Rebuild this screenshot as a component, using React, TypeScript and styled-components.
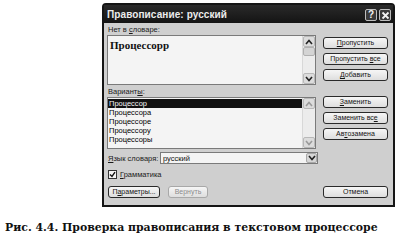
import styled, { createGlobalStyle } from "styled-components";

const GlobalStyle = createGlobalStyle`
  html, body {
    margin: 0;
    padding: 0;
    background: #ffffff;
  }
  body {
    font-family: "Liberation Sans", "DejaVu Sans", sans-serif;
  }
`;

const variants = [
  "Процессор",
  "Процессора",
  "Процессоре",
  "Процессору",
  "Процессоры",
];

function ScrollArrow({ up, faded }: { up?: boolean; faded?: boolean }) {
  return (
    <svg width="8" height="6" viewBox="0 0 8 6">
      <path
        d={up ? "M1 5 L4 1.5 L7 5" : "M1 1 L4 4.5 L7 1"}
        fill="none"
        stroke={faded ? "#9a9a9a" : "#222"}
        strokeWidth="1.6"
      />
    </svg>
  );
}

function App() {
  return (
    <Page>
      <GlobalStyle />
      <Dialog>
        <TitleBar>
          <Title>Правописание: русский</Title>
          <TitleButtons>
            <TitleButton>?</TitleButton>
            <TitleButton>
              <svg width="9" height="9" viewBox="0 0 9 9">
                <path d="M1.5 1.5 L7.5 7.5 M7.5 1.5 L1.5 7.5" stroke="#f2f2f2" strokeWidth="1.8" />
              </svg>
            </TitleButton>
          </TitleButtons>
        </TitleBar>
        <Body>
          <Section>
            <LeftCol>
              <Label>
                Нет в <Key>с</Key>ловаре:
              </Label>
              <TextBox>
                <Word>Процессорр</Word>
                <ScrollBar>
                  <ArrowBox>
                    <ScrollArrow up />
                  </ArrowBox>
                  <Thumb />
                  <Track />
                  <ArrowBox>
                    <ScrollArrow />
                  </ArrowBox>
                </ScrollBar>
              </TextBox>
            </LeftCol>
            <RightCol $offset={12}>
              <Button>
                <Key>П</Key>ропустить
              </Button>
              <Button>
                Пропустить <Key>в</Key>се
              </Button>
              <Button>
                <Key>Д</Key>обавить
              </Button>
            </RightCol>
          </Section>
          <Section>
            <LeftCol>
              <Label $gap={2}>
                Вариант<Key>ы</Key>:
              </Label>
              <ListBox>
                <Items>
                  {variants.map((v, i) => (
                    <Item key={v} $selected={i === 0}>
                      {v}
                    </Item>
                  ))}
                </Items>
                <ScrollBar>
                  <ArrowBox>
                    <ScrollArrow up faded />
                  </ArrowBox>
                  <Track />
                  <ArrowBox>
                    <ScrollArrow faded />
                  </ArrowBox>
                </ScrollBar>
              </ListBox>
            </LeftCol>
            <RightCol $offset={11}>
              <Button>
                <Key>З</Key>аменить
              </Button>
              <Button>
                Заменить вс<Key>е</Key>
              </Button>
              <Button>
                Ав<Key>т</Key>озамена
              </Button>
            </RightCol>
          </Section>
          <LangRow>
            <LangLabel>
              <Key>Я</Key>зык словаря:
            </LangLabel>
            <Combo>
              <ComboText>русский</ComboText>
              <ComboButton>
                <ScrollArrow />
              </ComboButton>
            </Combo>
          </LangRow>
          <CheckRow>
            <CheckBox>
              <svg width="7" height="7" viewBox="0 0 7 7">
                <path d="M1 3.5 L3 5.5 L6 1.2" fill="none" stroke="#111" strokeWidth="1.4" />
              </svg>
            </CheckBox>
            <CheckLabel>
              <Key>Г</Key>рамматика
            </CheckLabel>
          </CheckRow>
          <BottomRow>
            <BottomGroup>
              <Button $width={52}>
                П<Key>а</Key>раметры...
              </Button>
              <Button $width={40} $disabled>
                Вернуть
              </Button>
            </BottomGroup>
            <Button>Отмена</Button>
          </BottomRow>
        </Body>
      </Dialog>
      <Caption>
        Рис. 4.4. Проверка правописания в текстовом процессоре
      </Caption>
    </Page>
  );
}

export default App;

const Page = styled.div`
  width: 400px;
  height: 240px;
  padding-top: 3px;
  box-sizing: border-box;
  display: flex;
  flex-direction: column;
`;

const Dialog = styled.div`
  margin-left: 102px;
  width: 293px;
  height: 204px;
  box-sizing: border-box;
  border: 2px solid #151515;
  border-radius: 4px 4px 0 0;
  background: #cfcfcf;
  display: flex;
  flex-direction: column;
`;

const TitleBar = styled.div`
  height: 18px;
  flex: none;
  background: linear-gradient(#2a2a2a, #141414);
  display: flex;
  align-items: center;
  justify-content: space-between;
  padding: 0 2px 0 3px;
`;

const Title = styled.div`
  color: #ececec;
  font-size: 10px;
  font-weight: bold;
  letter-spacing: 0.1px;
`;

const TitleButtons = styled.div`
  display: flex;
  gap: 2px;
  margin-top: 2px;
`;

const TitleButton = styled.div`
  width: 12px;
  height: 12px;
  box-sizing: border-box;
  border: 1px solid #bdbdbd;
  border-radius: 2px;
  background: #3a3a3a;
  color: #f2f2f2;
  font-size: 10px;
  font-weight: bold;
  line-height: 10px;
  display: flex;
  align-items: center;
  justify-content: center;
`;

const Body = styled.div`
  flex: 1;
  padding: 2px 5px 0 3px;
  display: flex;
  flex-direction: column;
`;

const Section = styled.div`
  display: grid;
  grid-template-columns: 209px 65px;
  column-gap: 7px;
`;

const LeftCol = styled.div`
  display: flex;
  flex-direction: column;
`;

const RightCol = styled.div<{ $offset: number }>`
  display: flex;
  flex-direction: column;
  gap: 4px;
  padding-top: ${(p) => p.$offset}px;
`;

const Label = styled.div<{ $gap?: number }>`
  font-size: 7.5px;
  line-height: 10px;
  color: #1a1a1a;
  padding-left: 1px;
  margin-top: ${(p) => p.$gap ?? 0}px;
`;

const Key = styled.span`
  text-decoration: underline;
`;

const TextBox = styled.div`
  height: 50px;
  box-sizing: border-box;
  border: 1px solid #7a7a7a;
  background: #f4f4f4;
  display: flex;
`;

const Word = styled.div`
  flex: 1;
  font-family: "Liberation Serif", "DejaVu Serif", serif;
  font-weight: bold;
  font-size: 11px;
  padding: 3px 0 0 2px;
  color: #111;
`;

const ScrollBar = styled.div`
  width: 12px;
  flex: none;
  display: flex;
  flex-direction: column;
  background: #ececec;
  border-left: 1px solid #d8d8d8;
`;

const ArrowBox = styled.div`
  height: 11px;
  box-sizing: border-box;
  border: 1px solid #b8b8b8;
  border-radius: 2px;
  background: #dcdcdc;
  display: flex;
  align-items: center;
  justify-content: center;
`;

const Thumb = styled.div`
  height: 9px;
  box-sizing: border-box;
  border: 1px solid #b0b0b0;
  border-radius: 2px;
  background: #d4d4d4;
`;

const Track = styled.div`
  flex: 1;
`;

const ListBox = styled.div`
  height: 52px;
  box-sizing: border-box;
  border: 1px solid #7a7a7a;
  background: #f4f4f4;
  display: flex;
`;

const Items = styled.div`
  flex: 1;
  padding-top: 1px;
  display: flex;
  flex-direction: column;
`;

const Item = styled.div<{ $selected?: boolean }>`
  height: 9px;
  font-size: 7.5px;
  line-height: 9px;
  padding-left: 1px;
  color: ${(p) => (p.$selected ? "#f4f4f4" : "#000000")};
  background: ${(p) => (p.$selected ? "#111" : "transparent")};
`;

const Button = styled.div<{ $width?: number; $disabled?: boolean }>`
  width: ${(p) => p.$width ?? 65}px;
  height: 12px;
  box-sizing: border-box;
  border: 1px solid ${(p) => (p.$disabled ? "#a8a8a8" : "#2a2a2a")};
  border-radius: 3px;
  background: linear-gradient(#f6f6f6, #dedede);
  color: ${(p) => (p.$disabled ? "#8c8c8c" : "#141414")};
  font-size: 7px;
  line-height: 10px;
  text-align: center;
  white-space: nowrap;
`;

const LangRow = styled.div`
  display: flex;
  align-items: center;
  margin-top: 3px;
  height: 12px;
`;

const LangLabel = styled.div`
  width: 53px;
  font-size: 7.5px;
  color: #1a1a1a;
  padding-left: 1px;
  box-sizing: border-box;
`;

const Combo = styled.div`
  width: 158px;
  height: 12px;
  box-sizing: border-box;
  border: 1px solid #7a7a7a;
  background: #f4f4f4;
  display: flex;
  align-items: center;
`;

const ComboText = styled.div`
  flex: 1;
  font-size: 7.5px;
  padding-left: 2px;
  color: #111;
`;

const ComboButton = styled.div`
  width: 11px;
  height: 10px;
  box-sizing: border-box;
  border: 1px solid #a8a8a8;
  border-radius: 2px;
  background: #d6d6d6;
  display: flex;
  align-items: center;
  justify-content: center;
`;

const CheckRow = styled.div`
  display: flex;
  align-items: center;
  gap: 3px;
  margin-top: 6px;
  padding-left: 1px;
`;

const CheckBox = styled.div`
  width: 9px;
  height: 9px;
  box-sizing: border-box;
  border: 1px solid #333;
  background: #f4f4f4;
  display: flex;
  align-items: center;
  justify-content: center;
`;

const CheckLabel = styled.div`
  font-size: 7.5px;
  color: #1a1a1a;
`;

const BottomRow = styled.div`
  display: flex;
  justify-content: space-between;
  align-items: flex-start;
  margin-top: 7px;
  padding-left: 1px;
`;

const BottomGroup = styled.div`
  display: flex;
  gap: 8px;
`;

const Caption = styled.div`
  margin-top: 14px;
  padding-left: 5px;
  font-family: "DejaVu Serif", "Liberation Serif", serif;
  font-weight: bold;
  font-size: 10.9px;
  line-height: 14px;
  color: #111;
  white-space: nowrap;
`;
